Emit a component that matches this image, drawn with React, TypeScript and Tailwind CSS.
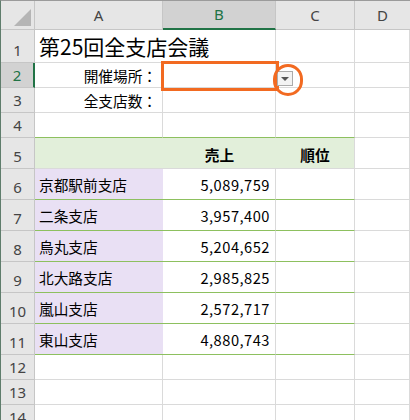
import React from 'react';

const jp = { fontFamily: '"Noto Sans CJK JP", "Noto Sans", sans-serif' };
const ui = { fontFamily: '"Noto Sans", "Liberation Sans", sans-serif' };

const branches = [
  { name: '京都駅前支店', sales: '5,089,759' },
  { name: '二条支店', sales: '3,957,400' },
  { name: '烏丸支店', sales: '5,204,652' },
  { name: '北大路支店', sales: '2,985,825' },
  { name: '嵐山支店', sales: '2,572,717' },
  { name: '東山支店', sales: '4,880,743' },
];

const RowHead = ({ n, h, selected }: { n: number; h: string; selected?: boolean }) => (
  <div
    style={ui}
    className={`${h} flex items-end justify-center pb-[1px] text-[15px] leading-[22px] border-b ${
      selected
        ? 'bg-[#d2d2d2] text-[#217346] border-r-2 border-r-[#217346] border-b-[#c6c6c6]'
        : 'bg-[#e6e6e6] text-[#444] border-r border-[#c6c6c6]'
    }`}
  >
    {n}
  </div>
);

const Blank = ({ h }: { h: string }) => <div className={`${h} border-r border-b border-[#dadada]`} />;

export default function App() {
  return (
    <div className="relative w-[410px] h-[420px] overflow-hidden bg-white border-t border-t-[#9b9b9b] border-l border-l-[#5f7d6c]">
      <div className="grid grid-cols-[34px_128px_113px_79px_1fr]" style={jp}>
        {/* column headers */}
        <div className="relative h-[29px] bg-[#e6e6e6] border-r border-b border-[#c6c6c6]">
          <div className="absolute right-[3px] bottom-[3px] w-0 h-0 border-l-[17px] border-l-transparent border-b-[17px] border-b-[#b5b5b5]" />
        </div>
        <div style={ui} className="h-[29px] flex items-center justify-center text-[15px] text-[#444] bg-[#e6e6e6] border-r border-b border-[#c6c6c6]">A</div>
        <div style={ui} className="h-[29px] flex items-center justify-center text-[15px] text-[#217346] bg-[#d2d2d2] border-r border-r-[#c6c6c6] border-b-2 border-b-[#217346]">B</div>
        <div style={ui} className="h-[29px] flex items-center justify-center text-[15px] text-[#444] bg-[#e6e6e6] border-r border-b border-[#c6c6c6]">C</div>
        <div style={ui} className="h-[29px] flex items-center justify-center text-[15px] text-[#444] bg-[#e6e6e6] border-b border-[#c6c6c6]">D</div>

        {/* row 1 */}
        <RowHead n={1} h="h-[33px]" />
        <div className="h-[33px] flex items-end pl-[4px] pb-[1px] border-b border-[#dadada] whitespace-nowrap overflow-visible text-[21px] leading-[30px] text-black">
          第25回全支店会議
        </div>
        <Blank h="h-[33px]" />
        <Blank h="h-[33px]" />
        <Blank h="h-[33px]" />

        {/* row 2 */}
        <RowHead n={2} h="h-[25px]" selected />
        <div className="h-[25px] flex items-end justify-end pr-[5px] pb-[1px] border-r border-b border-[#dadada] text-[14.67px] leading-[21px] text-black">
          開催場所：
        </div>
        <Blank h="h-[25px]" />
        <Blank h="h-[25px]" />
        <Blank h="h-[25px]" />

        {/* row 3 */}
        <RowHead n={3} h="h-[25px]" />
        <div className="h-[25px] flex items-end justify-end pr-[5px] pb-[1px] border-r border-b border-[#dadada] text-[14.67px] leading-[21px] text-black">
          全支店数：
        </div>
        <Blank h="h-[25px]" />
        <Blank h="h-[25px]" />
        <Blank h="h-[25px]" />

        {/* row 4 */}
        <RowHead n={4} h="h-[25px]" />
        <div className="h-[25px] border-r border-b border-b-[#8dc05f] border-r-[#dadada]" />
        <div className="h-[25px] border-r border-b border-b-[#8dc05f] border-r-[#dadada]" />
        <div className="h-[25px] border-r border-b border-b-[#8dc05f] border-r-[#dadada]" />
        <Blank h="h-[25px]" />

        {/* row 5: table header */}
        <RowHead n={5} h="h-[31px]" />
        <div className="h-[31px] bg-[#e2efda] border-b border-[#dadada]" />
        <div className="h-[31px] flex items-end justify-center pb-[3px] bg-[#e2efda] border-b border-[#dadada] text-[14.67px] leading-[21px] font-bold text-black">
          売上
        </div>
        <div className="h-[31px] flex items-end justify-center pb-[3px] bg-[#e2efda] border-r border-b border-[#dadada] text-[14.67px] leading-[21px] font-bold text-black">
          順位
        </div>
        <Blank h="h-[31px]" />

        {/* rows 6-11 */}
        {branches.map((b, i) => (
          <React.Fragment key={b.name}>
            <RowHead n={i + 6} h="h-[31px]" />
            <div className="h-[31px] flex items-end pl-[4px] pb-[4px] bg-[#e9e0f4] border-b border-[#8dc05f] text-[14.67px] leading-[21px] text-black whitespace-nowrap">
              {b.name}
            </div>
            <div className="h-[31px] flex items-end justify-end pr-[5px] pb-[4px] border-r border-r-[#dadada] border-b border-b-[#8dc05f] text-[14.67px] leading-[21px] tracking-[0.5px] text-black">
              {b.sales}
            </div>
            <div className="h-[31px] border-r border-r-[#dadada] border-b border-b-[#8dc05f]" />
            <Blank h="h-[31px]" />
          </React.Fragment>
        ))}

        {/* rows 12-14 */}
        {[12, 13, 14].map((n) => (
          <React.Fragment key={n}>
            <RowHead n={n} h="h-[25px]" />
            <Blank h="h-[25px]" />
            <Blank h="h-[25px]" />
            <Blank h="h-[25px]" />
            <Blank h="h-[25px]" />
          </React.Fragment>
        ))}
      </div>

      {/* selected cell highlight */}
      <div className="absolute left-[160px] top-[60px] w-[118px] h-[30px] border-[3px] border-[#f26a21]" />

      {/* dropdown button */}
      <div className="absolute left-[276px] top-[70px] w-[16px] h-[15px] bg-[#f3f3f3] border border-[#ababab] flex items-center justify-center">
        <div className="w-0 h-0 border-l-[4px] border-r-[4px] border-t-[4px] border-l-transparent border-r-transparent border-t-[#555]" />
      </div>

      {/* annotation circle */}
      <div className="absolute left-[272px] top-[63px] w-[30px] h-[32px] rounded-full border-[3px] border-[#f26a21]" />
    </div>
  );
}
